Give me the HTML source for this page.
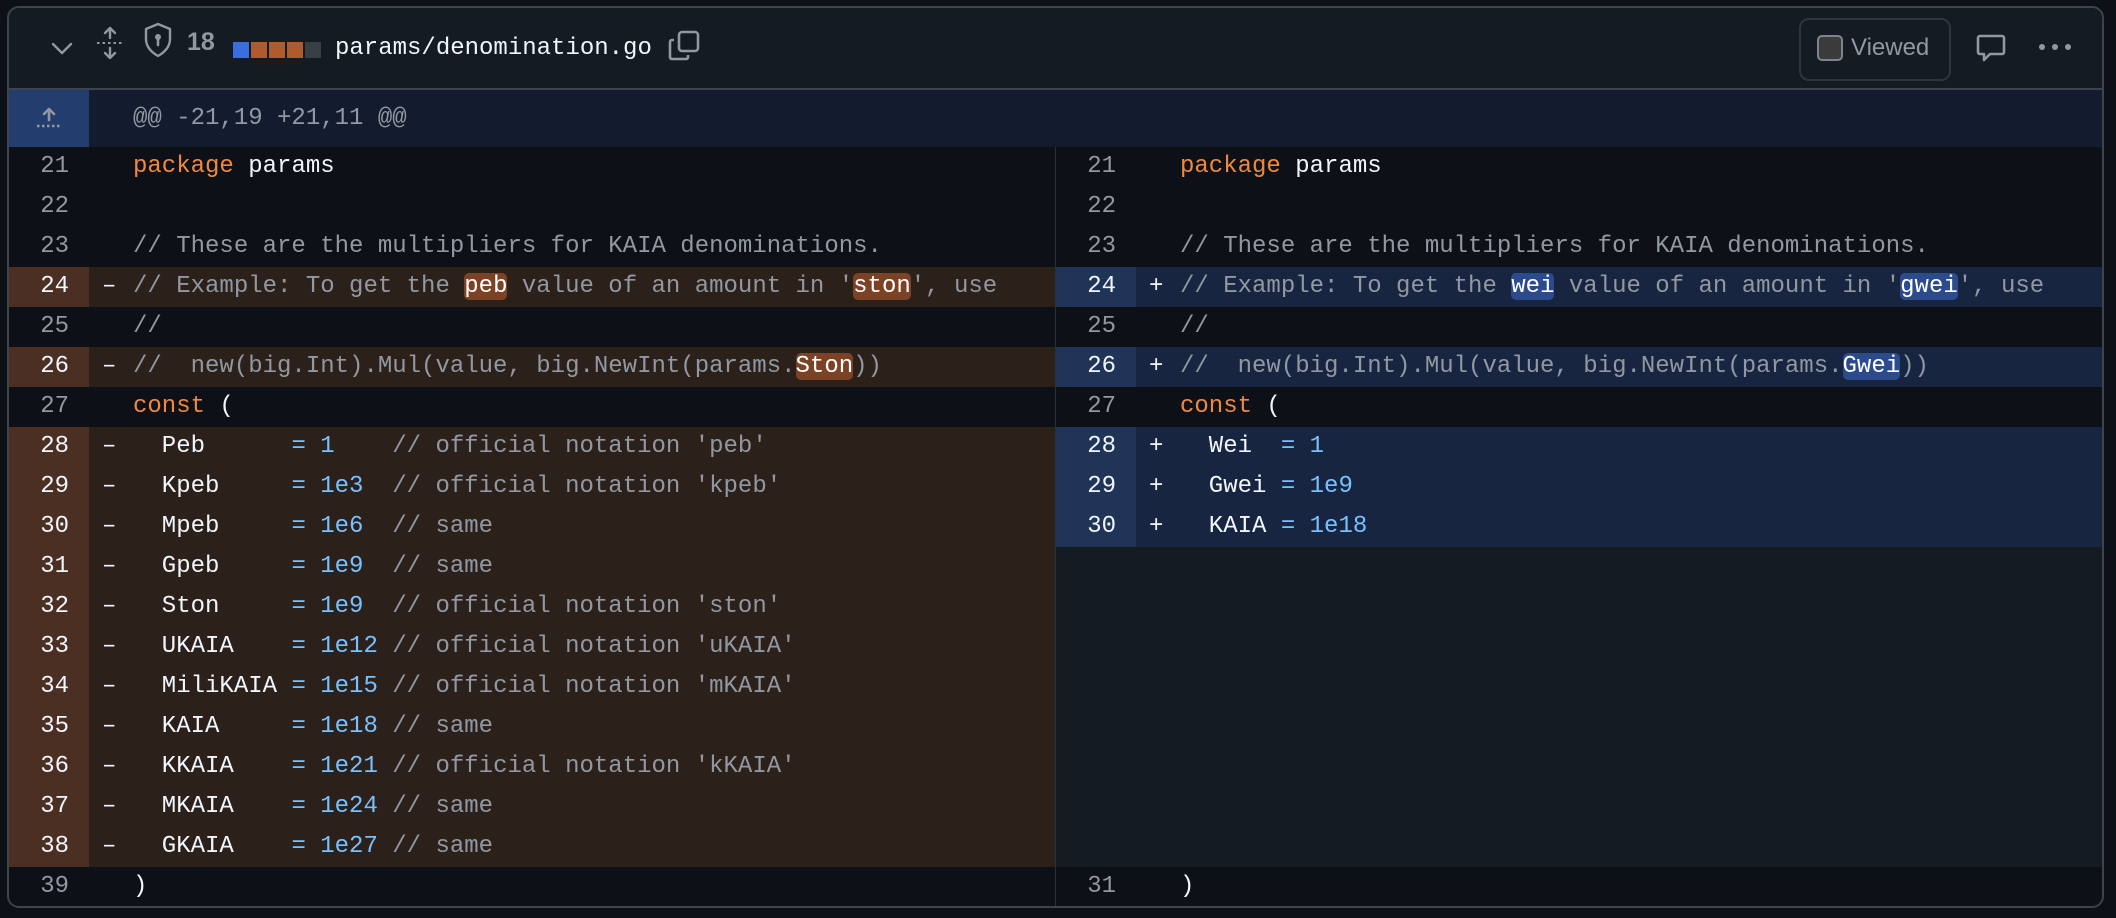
<!DOCTYPE html>
<html><head><meta charset="utf-8"><style>
*{margin:0;padding:0;box-sizing:border-box}
body{width:2116px;height:918px;background:#0d1117;overflow:hidden;font-family:"Liberation Mono",monospace;font-size:24px;color:#f0f6fc;position:relative}
.box{position:absolute;left:7px;top:6px;width:2097px;height:902px;border:2px solid #3d444d;border-radius:12px;overflow:hidden;background:#151b23}
.hdr{position:absolute;left:0;top:0;right:0;height:82px;background:#151b23;border-bottom:2px solid #3d444d}
.abs{position:absolute}
.hunk{position:absolute;left:0;top:82px;right:0;height:57px;background:#131c2e}
.hunk .n{position:absolute;left:0;top:0;width:80px;height:57px;background:#233e6e}
.hunk .t{position:absolute;left:124px;top:0;line-height:57px;color:#9198a1;white-space:pre}
.pane{position:absolute;top:139px}
.row{height:40px;display:flex;line-height:40px;white-space:pre}
.num{width:80px;text-align:right;padding-right:20px;color:#9198a1;flex:none}
.mk{width:44px;padding-left:13px;flex:none}
.code{flex:1}
.ctx{background:#0d1117}
.del{background:#2c201b}.del .num{background:#4b2f22;color:#f0f6fc}
.add{background:#172540}.add .num{background:#1f3456;color:#f0f6fc}
.emp{background:#151b23}
.k{color:#f0883e}.c{color:#9198a1}.b{color:#79c0ff}
.wd{background:#7b4226;color:#fff;border-radius:5px}
.wa{background:#2c4b8c;color:#fff;border-radius:5px}
</style></head><body>
<div class="box">
 <div class="hdr">
  <svg class="abs" style="left:42px;top:34px" width="22" height="14" viewBox="0 0 22 14"><path d="M2 2l9 9 9-9" stroke="#9198a1" stroke-width="2.4" fill="none" stroke-linecap="round" stroke-linejoin="round"/></svg>
  <svg class="abs" style="left:86px;top:18px" width="30" height="34" viewBox="0 0 30 34"><path d="M15 2v10M10 7l5-5 5 5M15 32v-10M10 27l5 5 5-5" stroke="#9198a1" stroke-width="2.4" fill="none" stroke-linecap="round" stroke-linejoin="round"/><path d="M2 17h26" stroke="#9198a1" stroke-width="2" stroke-dasharray="2.5 3"/></svg>
  <svg class="abs" style="left:134px;top:14px" width="30" height="36" viewBox="0 0 30 36"><path d="M15 2L3 7v10c0 8 5 13 12 17 7-4 12-9 12-17V7z" stroke="#9198a1" stroke-width="2.4" fill="none" stroke-linejoin="round"/><circle cx="15" cy="15" r="3" fill="#9198a1"/><path d="M15 16v7" stroke="#9198a1" stroke-width="2.6" stroke-linecap="round"/></svg>
  <div class="abs" style="left:178px;top:14px;line-height:40px;font-family:'Liberation Sans',sans-serif;font-weight:bold;color:#9198a1;font-size:25px">18</div>
  <div class="abs" style="left:224px;top:34px;width:16px;height:16px;background:#386ee0"></div>
  <div class="abs" style="left:242px;top:34px;width:16px;height:16px;background:#b05b2c"></div>
  <div class="abs" style="left:260px;top:34px;width:16px;height:16px;background:#b05b2c"></div>
  <div class="abs" style="left:278px;top:34px;width:16px;height:16px;background:#b05b2c"></div>
  <div class="abs" style="left:296px;top:34px;width:16px;height:16px;background:#3a3f46"></div>
  <div class="abs" style="left:326px;top:21px;line-height:40px;color:#f0f6fc">params/denomination.go</div>
  <svg class="abs" style="left:658px;top:22px" width="34" height="32" viewBox="0 0 34 32"><rect x="12" y="2" width="19" height="19" rx="3" stroke="#9198a1" stroke-width="2.6" fill="none"/><path d="M7 10H5a2 2 0 0 0-2 2v15a2 2 0 0 0 2 2h14a2 2 0 0 0 2-2v-2" stroke="#9198a1" stroke-width="2.6" fill="none"/></svg>
  <div class="abs" style="left:1790px;top:10px;width:152px;height:63px;border:2px solid #2f353d;border-radius:10px"></div>
  <div class="abs" style="left:1808px;top:27px;width:26px;height:26px;border:2px solid #7d848c;border-radius:5px;background:#3b3b3b"></div>
  <div class="abs" style="left:1842px;top:20px;line-height:40px;font-family:'Liberation Sans',sans-serif;color:#9198a1;font-size:24px">Viewed</div>
  <svg class="abs" style="left:1967px;top:26px" width="30" height="30" viewBox="0 0 30 30"><path d="M4 2h22a2 2 0 0 1 2 2v14a2 2 0 0 1-2 2H14l-6 6v-6H4a2 2 0 0 1-2-2V4a2 2 0 0 1 2-2z" stroke="#9198a1" stroke-width="2.6" fill="none" stroke-linejoin="round"/></svg>
  <svg class="abs" style="left:2029px;top:34px" width="34" height="10" viewBox="0 0 34 10"><circle cx="4" cy="5" r="3" fill="#9198a1"/><circle cx="17" cy="5" r="3" fill="#9198a1"/><circle cx="30" cy="5" r="3" fill="#9198a1"/></svg>
 </div>
 <div class="hunk"><div class="n"><svg style="position:absolute;left:26px;top:16px" width="28" height="24" viewBox="0 0 28 24"><path d="M14 14V4M9 8l5-5 5 5" stroke="#9198a1" stroke-width="2.6" fill="none" stroke-linecap="round" stroke-linejoin="round"/><path d="M2 20h24" stroke="#9198a1" stroke-width="2.4" stroke-dasharray="2.5 2.5"/></svg></div><div class="t">@@ -21,19 +21,11 @@</div></div>

 <div class="pane" style="left:0;width:1046px">
  <div class="row ctx"><div class="num">21</div><div class="mk"> </div><div class="code"><span class="k">package</span> params</div></div>
  <div class="row ctx"><div class="num">22</div><div class="mk"> </div><div class="code"></div></div>
  <div class="row ctx"><div class="num">23</div><div class="mk"> </div><div class="code c">// These are the multipliers for KAIA denominations.</div></div>
  <div class="row del"><div class="num">24</div><div class="mk">–</div><div class="code c">// Example: To get the <span class="wd">peb</span> value of an amount in '<span class="wd">ston</span>', use</div></div>
  <div class="row ctx"><div class="num">25</div><div class="mk"> </div><div class="code c">//</div></div>
  <div class="row del"><div class="num">26</div><div class="mk">–</div><div class="code c">//  new(big.Int).Mul(value, big.NewInt(params.<span class="wd">Ston</span>))</div></div>
  <div class="row ctx"><div class="num">27</div><div class="mk"> </div><div class="code"><span class="k">const</span> (</div></div>
  <div class="row del"><div class="num">28</div><div class="mk">–</div><div class="code">  Peb      <span class="b">= 1</span>    <span class="c">// official notation 'peb'</span></div></div>
  <div class="row del"><div class="num">29</div><div class="mk">–</div><div class="code">  Kpeb     <span class="b">= 1e3</span>  <span class="c">// official notation 'kpeb'</span></div></div>
  <div class="row del"><div class="num">30</div><div class="mk">–</div><div class="code">  Mpeb     <span class="b">= 1e6</span>  <span class="c">// same</span></div></div>
  <div class="row del"><div class="num">31</div><div class="mk">–</div><div class="code">  Gpeb     <span class="b">= 1e9</span>  <span class="c">// same</span></div></div>
  <div class="row del"><div class="num">32</div><div class="mk">–</div><div class="code">  Ston     <span class="b">= 1e9</span>  <span class="c">// official notation 'ston'</span></div></div>
  <div class="row del"><div class="num">33</div><div class="mk">–</div><div class="code">  UKAIA    <span class="b">= 1e12</span> <span class="c">// official notation 'uKAIA'</span></div></div>
  <div class="row del"><div class="num">34</div><div class="mk">–</div><div class="code">  MiliKAIA <span class="b">= 1e15</span> <span class="c">// official notation 'mKAIA'</span></div></div>
  <div class="row del"><div class="num">35</div><div class="mk">–</div><div class="code">  KAIA     <span class="b">= 1e18</span> <span class="c">// same</span></div></div>
  <div class="row del"><div class="num">36</div><div class="mk">–</div><div class="code">  KKAIA    <span class="b">= 1e21</span> <span class="c">// official notation 'kKAIA'</span></div></div>
  <div class="row del"><div class="num">37</div><div class="mk">–</div><div class="code">  MKAIA    <span class="b">= 1e24</span> <span class="c">// same</span></div></div>
  <div class="row del"><div class="num">38</div><div class="mk">–</div><div class="code">  GKAIA    <span class="b">= 1e27</span> <span class="c">// same</span></div></div>
  <div class="row ctx"><div class="num">39</div><div class="mk"> </div><div class="code">)</div></div>
 </div>
 <div class="abs" style="left:1046px;top:139px;width:1px;height:760px;background:#2a3038"></div>
 <div class="pane" style="left:1047px;width:1050px">
  <div class="row ctx"><div class="num">21</div><div class="mk"> </div><div class="code"><span class="k">package</span> params</div></div>
  <div class="row ctx"><div class="num">22</div><div class="mk"> </div><div class="code"></div></div>
  <div class="row ctx"><div class="num">23</div><div class="mk"> </div><div class="code c">// These are the multipliers for KAIA denominations.</div></div>
  <div class="row add"><div class="num">24</div><div class="mk">+</div><div class="code c">// Example: To get the <span class="wa">wei</span> value of an amount in '<span class="wa">gwei</span>', use</div></div>
  <div class="row ctx"><div class="num">25</div><div class="mk"> </div><div class="code c">//</div></div>
  <div class="row add"><div class="num">26</div><div class="mk">+</div><div class="code c">//  new(big.Int).Mul(value, big.NewInt(params.<span class="wa">Gwei</span>))</div></div>
  <div class="row ctx"><div class="num">27</div><div class="mk"> </div><div class="code"><span class="k">const</span> (</div></div>
  <div class="row add"><div class="num">28</div><div class="mk">+</div><div class="code">  Wei  <span class="b">= 1</span></div></div>
  <div class="row add"><div class="num">29</div><div class="mk">+</div><div class="code">  Gwei <span class="b">= 1e9</span></div></div>
  <div class="row add"><div class="num">30</div><div class="mk">+</div><div class="code">  KAIA <span class="b">= 1e18</span></div></div>
  <div class="row emp" style="height:320px"></div>
  <div class="row ctx"><div class="num">31</div><div class="mk"> </div><div class="code">)</div></div>
 </div>
</div>
</body></html>
